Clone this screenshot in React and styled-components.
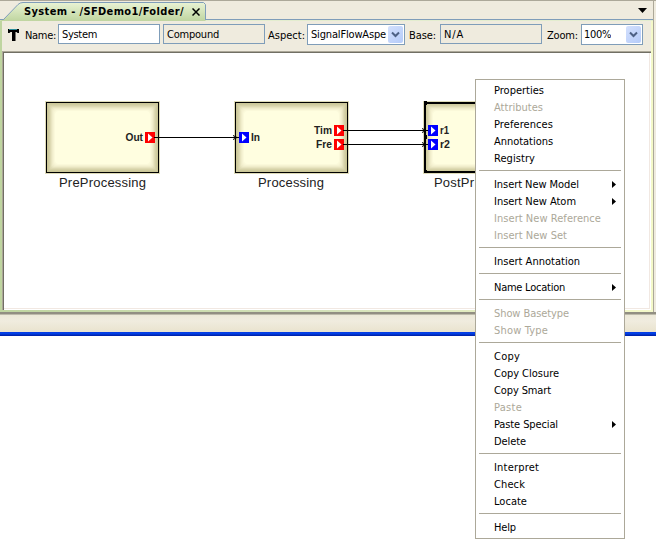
import React, { useLayoutEffect, useRef } from "react";
import styled, { createGlobalStyle } from "styled-components";

const GlobalStyle = createGlobalStyle`
  * { box-sizing: border-box; }
  body { margin: 0; background: #fff; font: 11px "DejaVu Sans Condensed", "DejaVu Sans", sans-serif; font-stretch: condensed; color: #000; overflow: hidden; }
`;

const Page = styled.div`position: relative; width: 656px; height: 548px; overflow: hidden; background: #fff;`;
const Window = styled.div`
  height: 312px;
  background: #efebde;
  border-top: 1px solid #aca899;
  display: flex;
  flex-direction: column;
`;
const TabBar = styled.div`
  height: 20px;
  flex: none;
  display: flex;
  justify-content: space-between;
  width: 654px;
  border-right: 1px solid #aca899;
  background: linear-gradient(#efebde, #efebde 18px, #7f9db9 18px, #7f9db9 19px, #e4edcf 19px);
`;
const Tab = styled.div`position: relative; width: 206px; height: 20px; padding: 1px 0 0 24px; display: flex; align-items: flex-start;`;
const TabShape = styled.svg`position: absolute; left: 0; top: 0;`;
const TabTitle = styled.div`position: relative; width: 168px; height: 19px; line-height: 20px; font-weight: bold;`;
const CloseIcon = styled.svg`position: relative; margin-top: 6px;`;
const MenuArrow = styled.svg`margin: 7px 6px 0 0;`;

const Frame = styled.div`
  flex: 1;
  min-height: 0;
  width: 654px;
  padding: 0 2px 2px 2px;
  background: linear-gradient(90deg, #bfd5a0, #d5e2ba 50%, #f4f9c9);
  border-right: 1px solid #aca899;
  display: flex;
  flex-direction: column;
`;
const Toolbar = styled.div`
  height: 30px;
  flex: none;
  background: #efebde;
  display: flex;
  align-items: flex-start;
  padding: 3px 0 0 6px;
`;
const TypeIcon = styled.svg`margin: 5px 6px 0 0; flex: none;`;
const Caption = styled.div`width: ${(p) => p.$w}px; flex: none; height: 20px; line-height: 23px;`;
const Field = styled.div`
  width: ${(p) => p.$w}px;
  height: 20px;
  flex: none;
  margin-right: ${(p) => p.$gap}px;
  padding-left: 3px;
  line-height: 19px;
  border: 1px solid #7f9db9;
  background: ${(p) => (p.$editable ? "#fff" : "#efebde")};
`;
const Select = styled(Field)`height: 21px; display: flex; justify-content: space-between; padding: 0 1px 0 ${(p) => p.$pad}px; line-height: 20px; background: #fff;`;
const SelectValue = styled.div`overflow: hidden; white-space: nowrap;`;
const SelectButton = styled.div`
  width: 15px; height: 17px; margin-top: 1px; flex: none; border-radius: 2px;
  background: linear-gradient(135deg, #d3e0fd, #b5cbf9);
  display: flex; align-items: center; justify-content: center;
`;
const Canvas = styled.div`
  flex: 1;
  min-height: 0;
  border-top: 1px solid #aca899;
  border-left: 1px solid #aca899;
  box-shadow: inset 1px 1px #716f64, inset -1px -1px #fff, inset -2px -2px #f1e8e2;
  background: #fff;
`;
const Diagram = styled.svg`position: absolute; left: 0; top: 53px; font-family: "Liberation Sans", Arial, sans-serif;`;
const DockBar = styled.div`height: 20px; background: linear-gradient(#918e82 0 2px, #bdbaaa 2px 3px, #ece9d8 3px, #f0ecdf 9px, #e9e3ce 20px);`;
const BlueEdge = styled.div`height: 4px; background: linear-gradient(#0831d9, #0148f0 1px, #0138d8 2px, #001da0 4px);`;

const Menu = styled.div`
  position: absolute;
  left: 475px;
  top: 79px;
  width: 150px;
  height: 460px;
  padding: 2px 3px;
  border: 1px solid #aca899;
  background: #fff;
`;
const MenuItem = styled.div`
  height: 17px;
  line-height: 16px;
  padding: 0 5px 0 15px;
  display: flex;
  justify-content: space-between;
  align-items: center;
  color: ${(p) => (p.$disabled ? "#aca899" : "#000")};
`;
const Separator = styled.div`height: 9px; border-top: 3px solid #fff; border-bottom: 5px solid #fff; background: #aca899;`;
const Text = styled.span`display: inline-block; white-space: nowrap;`;

// Spreads the letters of a label so that it occupies the given advance width.
function Label({ width, children }) {
  const ref = useRef(null);
  useLayoutEffect(() => {
    const el = ref.current;
    el.style.letterSpacing = "0px";
    const natural = el.getBoundingClientRect().width;
    el.style.letterSpacing = `${(width - natural) / children.length}px`;
  }, [width, children]);
  return <Text ref={ref}>{children}</Text>;
}

const menu = [
  ["Properties", 50], ["Attributes", 49, "off"], ["Preferences", 59], ["Annotations", 59], ["Registry", 41], null,
  ["Insert New Model", 85, "sub"], ["Insert New Atom", 82, "sub"], ["Insert New Reference", 107, "off"], ["Insert New Set", 73, "off"], null,
  ["Insert Annotation", 86], null,
  ["Name Location", 71, "sub"], null,
  ["Show Basetype", 75, "off"], ["Show Type", 54, "off"], null,
  ["Copy", 26], ["Copy Closure", 65], ["Copy Smart", 57], ["Paste", 28, "off"], ["Paste Special", 64, "sub"], ["Delete", 32], null,
  ["Interpret", 45], ["Check", 31], ["Locate", 33], null,
  ["Help", 22],
];

function Chevron() {
  return (
    <svg width="9" height="7" viewBox="0 0 9 7">
      <path d="M1 1.5 4.5 5 8 1.5" fill="none" stroke="#4d6185" strokeWidth="2" />
    </svg>
  );
}

function Port({ x, y, color, label, side, width }) {
  return (
    <g>
      <rect x={x} y={y} width="10" height="11" fill={color} />
      <path d={`M${x + 3} ${y + 1.5}v8l4.5-4z`} fill="#fff" />
      <text x={side === "left" ? x - 2 - width : x + 12} y={y + 9} textLength={width} lengthAdjust="spacingAndGlyphs" fontSize="11" fontWeight="bold" fill="#222">{label}</text>
    </g>
  );
}

const rings = ["#cbc798", "#d0cca0", "#d6d2a8", "#dedab3", "#e8e4c0", "#f0edcb", "#f6f3d3", "#fbf9da", "#fffee0"];

function Block({ x, name, nameX, nameWidth, selected, children }) {
  return (
    <g>
      <rect x={x - 0.5} y="101.5" width="114" height="72" fill="none" stroke="#dedbb8" />
      {rings.map((c, i) => (
        <rect key={c} x={x + 1 + i} y={103 + i} width={111 - 2 * i} height={69 - 2 * i} rx={i / 2} fill={c} />
      ))}
      <rect x={x + 0.5} y="102.5" width="112" height="70" fill="none" stroke="#000" />
      {selected && <path d={`M${x + 1} 103h111v69h-111z`} fill="none" stroke="#000" strokeWidth="2" />}
      {selected && <path d={`M${x} 101h3v4h-3zM${x} 135h3v4h-3zM${x} 170h3v3h-3z`} />}
      <text x={nameX} y="187" textLength={nameWidth} fontSize="13" fill="#222">{name}</text>
      {children}
    </g>
  );
}

function Wire({ x1, x2, y }) {
  return (
    <g stroke="#000" fill="none">
      <path d={`M${x1} ${y + 0.5}H${x2}`} />
      <path d={`M${x2 - 6} ${y - 1.5}l4 2-4 2`} strokeWidth="1" />
    </g>
  );
}

export default function App() {
  return (
    <Page>
      <GlobalStyle />
      <Window>
        <TabBar>
          <Tab>
            <TabShape width="206" height="20">
              <defs>
                <linearGradient id="tab" x1="0" y1="0" x2="0" y2="1">
                  <stop offset="0" stopColor="#e9f3d4" />
                  <stop offset="1" stopColor="#bfd5a0" />
                </linearGradient>
              </defs>
              <path d="M0 20V19.5L4 18.5 18 3.5Q20 1.5 23 1.5H203.5L205.5 3.5V20Z" fill="url(#tab)" />
              <path d="M0 18.5H3.5L18 3.5Q20 1.5 23 1.5H203.5L205.5 3.5V19" fill="none" stroke="#7f9db9" />
            </TabShape>
            <TabTitle><Label width={160}>System - /SFDemo1/Folder/</Label></TabTitle>
            <CloseIcon width="8" height="8"><path d="M.5.5 7.5 7.5M7.5.5.5 7.5" stroke="#000" strokeWidth="1.5" /></CloseIcon>
          </Tab>
          <MenuArrow width="9" height="5"><path d="M0 0h9L4.5 5z" /></MenuArrow>
        </TabBar>
        <Frame>
          <Toolbar>
            <TypeIcon width="11" height="12">
              <path d="M0 0h11v4H9.5L8.5 3H7.5v9H4V3H2.5L1.5 4H0z" />
              <path d="M1 .5h8" stroke="#2a8b9a" />
            </TypeIcon>
            <Caption $w={33}><Label width={31}>Name:</Label></Caption>
            <Field $w={102} $gap={3} $editable><Label width={35}>System</Label></Field>
            <Field $w={102} $gap={3}><Label width={52}>Compound</Label></Field>
            <Caption $w={39}><Label width={37}>Aspect:</Label></Caption>
            <Select $w={98} $gap={4} $pad={3}>
              <SelectValue><Label width={75}>SignalFlowAspe</Label></SelectValue>
              <SelectButton><Chevron /></SelectButton>
            </Select>
            <Caption $w={31}><Label width={27}>Base:</Label></Caption>
            <Field $w={102} $gap={5}><Label width={20}>N/A</Label></Field>
            <Caption $w={34}><Label width={31}>Zoom:</Label></Caption>
            <Select $w={62} $gap={0} $pad={2}>
              <SelectValue><Label width={27}>100%</Label></SelectValue>
              <SelectButton><Chevron /></SelectButton>
            </Select>
          </Toolbar>
          <Canvas />
        </Frame>
      </Window>
      <DockBar />
      <BlueEdge />
      <Diagram width="656" height="255" viewBox="0 53 656 255">
        <Block x={46} name="PreProcessing" nameX={59} nameWidth={87}>
          <Port x={145} y={132} color="#f00" label="Out" side="left" width={17.5} />
        </Block>
        <Block x={235} name="Processing" nameX={258} nameWidth={66}>
          <Port x={239} y={132} color="#00f" label="In" side="right" width={9} />
          <Port x={334} y={125} color="#f00" label="Tim" side="left" width={18} />
          <Port x={334} y={139} color="#f00" label="Fre" side="left" width={16} />
        </Block>
        <Block x={424} name="PostPr" nameX={434} nameWidth={40} selected>
          <Port x={428} y={125} color="#00f" label="r1" side="right" width={9} />
          <Port x={428} y={139} color="#00f" label="r2" side="right" width={10} />
        </Block>
        <Wire x1={154} x2={239} y={137} />
        <Wire x1={343} x2={428} y={130} />
        <Wire x1={343} x2={428} y={144} />
      </Diagram>
      <Menu>
        {menu.map((item, i) =>
          item ? (
            <MenuItem key={item[0]} $disabled={item[2] === "off"}>
              <Label width={item[1]}>{item[0]}</Label>
              {item[2] === "sub" && <svg width="4" height="7"><path d="M0 0l4 3.5-4 3.5z" /></svg>}
            </MenuItem>
          ) : (
            <Separator key={i} />
          )
        )}
      </Menu>
    </Page>
  );
}
